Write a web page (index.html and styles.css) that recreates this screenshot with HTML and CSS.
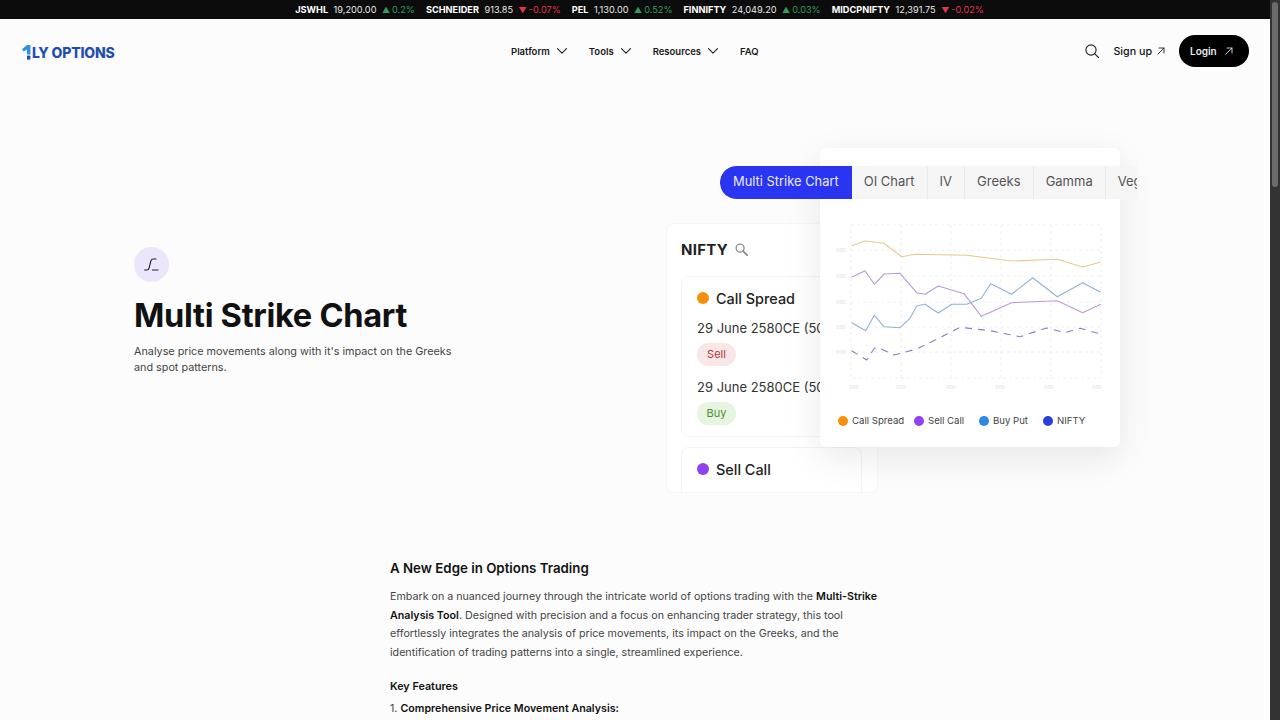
FILE: index.html
```html
<!DOCTYPE html>
<html lang="en">
<head>
<meta charset="utf-8">
<title>Multi Strike Chart</title>
<link rel="stylesheet" href="styles.css">
</head>
<body>
<div class="page">
  <div class="main">
    <div class="ticker">
      <span class="tick"><b>JSWHL</b><span>19,200.00</span><span class="up"><i>▲</i>0.2%</span></span>
      <span class="tick"><b>SCHNEIDER</b><span>913.85</span><span class="down"><i>▼</i>-0.07%</span></span>
      <span class="tick"><b>PEL</b><span>1,130.00</span><span class="up"><i>▲</i>0.52%</span></span>
      <span class="tick"><b>FINNIFTY</b><span>24,049.20</span><span class="up"><i>▲</i>0.03%</span></span>
      <span class="tick"><b>MIDCPNIFTY</b><span>12,391.75</span><span class="down"><i>▼</i>-0.02%</span></span>
    </div>
    <header class="header">
      <a class="logo">
        <svg class="logo-one" width="9" height="15" viewBox="0 0 9 15"><path d="M0 4.200 5 0h3.400v9.400H5V4.600L1.800 6.400z" fill="#2f8fe0"/><rect x="5" y="10.600" width="3.400" height="4" fill="#1d4fb2"/></svg>
        <span>LY OPTIONS</span>
      </a>
      <nav class="nav">
        <a class="nav-item">Platform<svg width="10" height="6" viewBox="0 0 10 6"><path d="M.5.7 5 5.200 9.500.7" class="stroke"/></svg></a>
        <a class="nav-item">Tools<svg width="10" height="6" viewBox="0 0 10 6"><path d="M.5.7 5 5.200 9.500.7" class="stroke"/></svg></a>
        <a class="nav-item">Resources<svg width="10" height="6" viewBox="0 0 10 6"><path d="M.5.7 5 5.200 9.500.7" class="stroke"/></svg></a>
        <a class="nav-item">FAQ</a>
      </nav>
      <div class="actions">
        <svg width="14" height="14" viewBox="0 0 14 14"><circle cx="6" cy="6" r="5.100" class="stroke"/><path d="m9.800 9.800 3.700 3.700" class="stroke"/></svg>
        <a class="signup">Sign up<svg width="8" height="8" viewBox="0 0 8 8"><path d="M.8 7.200 7 1M2 1h5v5" class="stroke thin"/></svg></a>
        <a class="login">Login<svg width="8" height="8" viewBox="0 0 8 8"><path d="M.8 7.200 7 1M2 1h5v5" class="stroke thin light"/></svg></a>
      </div>
    </header>
    <section class="hero">
      <div class="hero-text">
        <div class="hero-icon"><svg width="15" height="13" viewBox="0 0 15 13"><path d="M.5 12H3c1.200 0 1.700-.6 2.100-2l1.600-6.500C7.100 1.800 7.800 1 9 1h3M8.500 12H14" class="stroke"/></svg></div>
        <h1>Multi Strike Chart</h1>
        <p>Analyse price movements along with it's impact on the Greeks and spot patterns.</p>
      </div>
      <div class="visual">
        <div class="list-card">
          <div class="list-title">NIFTY<svg width="13" height="13" viewBox="0 0 14 14"><circle cx="5.500" cy="5.500" r="4.300" class="stroke grey"/><path d="m8.800 8.800 4.500 4.500" class="stroke grey thick"/></svg></div>
          <div class="strat">
            <div class="strat-head"><span class="dot orange big"></span>Call Spread</div>
            <div class="leg">29 June 2580CE (50</div>
            <span class="pill sell">Sell</span>
            <div class="leg">29 June 2580CE (50</div>
            <span class="pill buy">Buy</span>
          </div>
          <div class="strat">
            <div class="strat-head"><span class="dot purple big"></span>Sell Call</div>
          </div>
        </div>
        <div class="chart-card">
          <svg class="chart" width="300" height="200" viewBox="820 200 300 200">
            <g class="grid">
              <rect x="851" y="225" width="250" height="153"/>
              <path d="M851 250H1101M851 276H1101M851 302H1101M851 327H1101M851 352H1101M901 225V378M951 225V378M1001 225V378M1051 225V378"/>
            </g>
            <g class="axis">
              <text x="841" y="252">000</text><text x="841" y="278">000</text><text x="841" y="304">000</text><text x="841" y="329">000</text><text x="841" y="354">000</text>
              <text x="854" y="389">000</text><text x="901" y="389">000</text><text x="951" y="389">000</text><text x="1000" y="389">000</text><text x="1049" y="389">000</text><text x="1097" y="389">000</text>
            </g>
            <polyline class="line" stroke="#e6c98e" points="851.700,245.700 865,241 884,243.300 901.700,256.700 915,254.300 966.700,255.300 1011.700,261 1057.300,259.300 1082.700,267 1100.700,262"/>
            <polyline class="line" stroke="#bb9ad8" points="851.700,277.300 865,270.700 874.300,284.300 884,274 900,273.300 916.700,292.700 925,294.300 938.300,286 964,293.700 981.300,316.300 1011.700,302.700 1057.300,300.700 1082.700,312.700 1100.700,304.300"/>
            <polyline class="line" stroke="#8fb3d4" points="851.700,322.700 865.700,330.700 874.300,315.300 884,326.700 900,327.700 910,318.300 916.700,306 925,304.300 938.300,313 951.700,304.300 966.700,304.300 981.300,298.300 990.700,283.700 1011.700,294.300 1032.700,277.700 1057.300,296.700 1082.700,282.700 1100.700,292.300"/>
            <polyline class="line dashed" stroke="#7f84b8" points="851.700,350.700 866.700,360 874.300,348.300 878.300,347.700 894,355 916.700,349 936.700,339.300 960,327.300 990,330.700 1020,336.700 1046.700,328 1065,332.700 1080,328.300 1100.700,334"/>
          </svg>
          <div class="legend">
            <span class="legend-item"><span class="dot orange"></span>Call Spread</span>
            <span class="legend-item"><span class="dot purple"></span>Sell Call</span>
            <span class="legend-item"><span class="dot blue"></span>Buy Put</span>
            <span class="legend-item"><span class="dot navy"></span>NIFTY</span>
          </div>
        </div>
        <div class="tabs">
          <span class="tab active">Multi Strike Chart</span>
          <span class="tab">OI Chart</span>
          <span class="tab">IV</span>
          <span class="tab">Greeks</span>
          <span class="tab">Gamma</span>
          <span class="tab">Vega</span>
        </div>
      </div>
    </section>
    <article class="article">
      <h2>A New Edge in Options Trading</h2>
      <p>Embark on a nuanced journey through the intricate world of options trading with the <strong>Multi-Strike Analysis Tool</strong>. Designed with precision and a focus on enhancing trader strategy, this tool effortlessly integrates the analysis of price movements, its impact on the Greeks, and the identification of trading patterns into a single, streamlined experience.</p>
      <h3>Key Features</h3>
      <ol>
        <li>1. <strong>Comprehensive Price Movement Analysis:</strong></li>
      </ol>
    </article>
  </div>
  <div class="scrollbar"><div class="thumb"></div></div>
</div>
</body>
</html>
```
FILE: styles.css
```css
* { box-sizing: border-box; }
html, body { margin: 0; height: 100%; overflow: hidden; }
body { font-family: Inter, "Liberation Sans", sans-serif; color: #111; background: #fcfcfc; }
.page { display: flex; height: 720px; overflow: hidden; }
.main { flex: 1; min-width: 0; height: 720px; overflow: hidden; background: #fcfcfc; }
.scrollbar { width: 10px; background: #333; padding: 2px 2px 0; }
.thumb { height: 185px; background: #6b6b6b; border-radius: 3px; }

.stroke { fill: none; stroke: #222; stroke-width: 1.1; stroke-linecap: round; stroke-linejoin: round; }
.stroke.thin { stroke-width: .9; }
.stroke.light { stroke: #ddd; }
.stroke.grey { stroke: #8c8c8c; stroke-width: 1.4; }
.stroke.thick { stroke-width: 2; }

.ticker { height: 19px; background: #0c0c0c; color: #e8e8e8; display: flex; justify-content: center; align-items: center; gap: 11px; font-size: 9.200px; padding-left: 9px; }
.tick { display: flex; gap: 5.500px; white-space: nowrap; }
.tick b { color: #fff; font-weight: 700; }
.tick i { font-style: normal; font-size: 8px; margin-right: 2px; }
.up { color: #2f9e5f; }
.down { color: #e0364c; }

.header { height: 64px; display: flex; align-items: center; padding: 0 21px 0 22px; }
.logo { display: flex; align-items: flex-end; gap: 1px; color: #1d4fb2; font-weight: 800; font-size: 14px; letter-spacing: -.15px; line-height: 14px; width: 489px; height: 16px; margin-top: 2px; }
.nav { display: flex; gap: 22px; align-items: center; }
.nav-item { display: flex; align-items: center; gap: 7px; font-size: 9.500px; font-weight: 600; color: #1a1a1a; }
.actions { margin-left: auto; display: flex; align-items: center; }
.signup { display: flex; align-items: center; gap: 5px; margin-left: 14px; font-size: 10.700px; font-weight: 500; }
.login { margin-left: 14px; width: 70px; height: 32px; border-radius: 16px; background: #000; color: #eee; display: flex; align-items: center; justify-content: space-between; padding: 0 16px 0 11px; font-size: 10px; font-weight: 600; }

.hero { display: flex; justify-content: space-between; padding: 65px 133px 0 134px; height: 475px; }
.hero-text { width: 330px; padding-top: 99px; }
.hero-icon { width: 35px; height: 35px; border-radius: 50%; background: #ebe6fb; display: flex; align-items: center; justify-content: center; }
.hero-text h1 { margin: 11px 0 0; font-size: 32.600px; line-height: 44px; font-weight: 700; letter-spacing: -.3px; color: #111; white-space: nowrap; }
.hero-text p { margin: 7px 0 0; font-size: 10.800px; line-height: 16px; color: #444; }

.visual { position: relative; width: 471px; height: 345px; }
.list-card { position: absolute; left: 0; top: 75px; width: 212px; height: 270px; overflow: hidden; background: #fff; border-radius: 8px; border: 1px solid #f6f6f6; padding: 14px; }
.list-title { display: flex; align-items: center; gap: 7px; font-size: 15px; font-weight: 700; letter-spacing: .3px; color: #222; height: 22px; margin-bottom: 16px; }
.strat { width: 181px; border: 1px solid #f3f3f3; border-radius: 8px; padding: 12px 15px 11px; margin-bottom: 10px; }
.strat:last-child { min-height: 80px; }
.strat-head { display: flex; align-items: center; gap: 7px; font-size: 14.400px; font-weight: 500; color: #222; height: 18px; }
.dot { display: inline-block; width: 10px; height: 10px; border-radius: 50%; flex: none; }
.dot.big { width: 12px; height: 12px; }
.orange { background: #f79009; }
.purple { background: #9141ef; }
.blue { background: #2d86e6; }
.navy { background: #2b3fd9; }
.leg { font-size: 13px; color: #333; white-space: nowrap; margin-top: 13px; line-height: 17px; }
.pill { display: block; width: 39px; height: 23px; line-height: 23px; text-align: center; border-radius: 12px; font-size: 11px; margin-top: 6px; }
.pill.sell { background: #f9e7e7; color: #b5343c; }
.pill.buy { background: #e6f4e1; color: #4c8f30; }

.chart-card { position: absolute; left: 154px; top: 0; width: 300px; height: 299px; background: #fff; border-radius: 6px; box-shadow: 0 10px 36px rgba(0,0,0,.09); padding-top: 52px; }
.chart { display: block; }
.grid rect, .grid path { fill: none; stroke: #eeeef3; stroke-width: 1; stroke-dasharray: 3 3; }
.axis text { font-size: 5px; fill: #d8d8d8; text-anchor: middle; }
.line { fill: none; stroke-width: 1.100; stroke-linejoin: round; }
.line.dashed { stroke-dasharray: 7 6; }
.legend { display: grid; grid-template-columns: 76px 65px 64px auto; padding-left: 18px; margin-top: 15px; }
.legend-item { display: flex; align-items: center; gap: 4px; font-size: 9.600px; color: #444; white-space: nowrap; }

.tabs { position: absolute; left: 54px; top: 18px; width: 417px; height: 33px; overflow: hidden; display: flex; background: #f5f5f5; border-radius: 16px 0 0 16px; }
.tab { flex: none; height: 33px; line-height: 31px; padding: 0 12px; font-size: 13px; color: #555; border-right: 1px solid #eaeaea; white-space: nowrap; }
.tab.active { background: #2a35f2; color: #e8eaff; border: 0; border-radius: 16px 0 0 16px; padding: 0 13px; font-size: 12.900px; }

.article { width: 490px; margin-left: 390px; }
.article h2 { margin: 0 0 10px; font-size: 13.300px; line-height: 20px; font-weight: 600; color: #111; }
.article p { margin: 0 0 15px; font-size: 10.700px; line-height: 18.700px; color: #444; }
.article p strong, .article li strong { color: #111; font-weight: 600; }
.article h3 { margin: 0 0 4px; font-size: 10.800px; line-height: 18px; font-weight: 600; color: #111; }
.article ol { margin: 0; padding: 0; list-style: none; font-size: 10.700px; line-height: 18px; color: #444; }
```
